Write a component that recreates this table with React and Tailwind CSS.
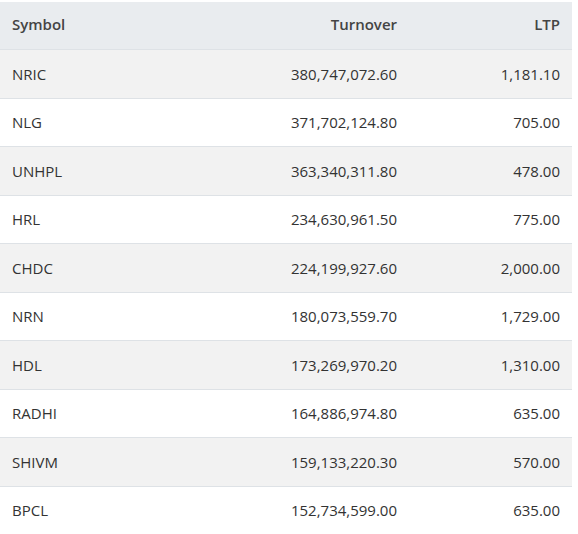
import React from 'react';

const rows = [
  ['NRIC', '380,747,072.60', '1,181.10'],
  ['NLG', '371,702,124.80', '705.00'],
  ['UNHPL', '363,340,311.80', '478.00'],
  ['HRL', '234,630,961.50', '775.00'],
  ['CHDC', '224,199,927.60', '2,000.00'],
  ['NRN', '180,073,559.70', '1,729.00'],
  ['HDL', '173,269,970.20', '1,310.00'],
  ['RADHI', '164,886,974.80', '635.00'],
  ['SHIVM', '159,133,220.30', '570.00'],
  ['BPCL', '152,734,599.00', '635.00'],
];

export default function App() {
  return (
    <div className="bg-white w-[578px] h-[534px] overflow-hidden pt-[2px] font-['Open_Sans',sans-serif] text-[15px]">
      <div className="w-[572px]">
        {/* cabecera */}
        <div className="grid grid-cols-[205px_204px_163px] h-[48px] pb-[2px] items-center bg-[#e9ecef] border-b border-[#dee2e6] text-[#444] font-semibold">
          <div className="pl-3">Symbol</div>
          <div className="pr-3 text-right">Turnover</div>
          <div className="pr-3 text-right">LTP</div>
        </div>

        {rows.map((r, i) => (
          <div
            key={r[0]}
            className={`grid grid-cols-[205px_204px_163px] h-[48.5px] items-center border-b border-[#dee2e6] text-[#333] ${i % 2 === 0 ? 'bg-[#f2f2f2]' : 'bg-white'}`}
          >
            <div className="pl-3">{r[0]}</div>
            <div className="pr-3 text-right">{r[1]}</div>
            <div className="pr-3 text-right">{r[2]}</div>
          </div>
        ))}
      </div>
    </div>
  );
}
